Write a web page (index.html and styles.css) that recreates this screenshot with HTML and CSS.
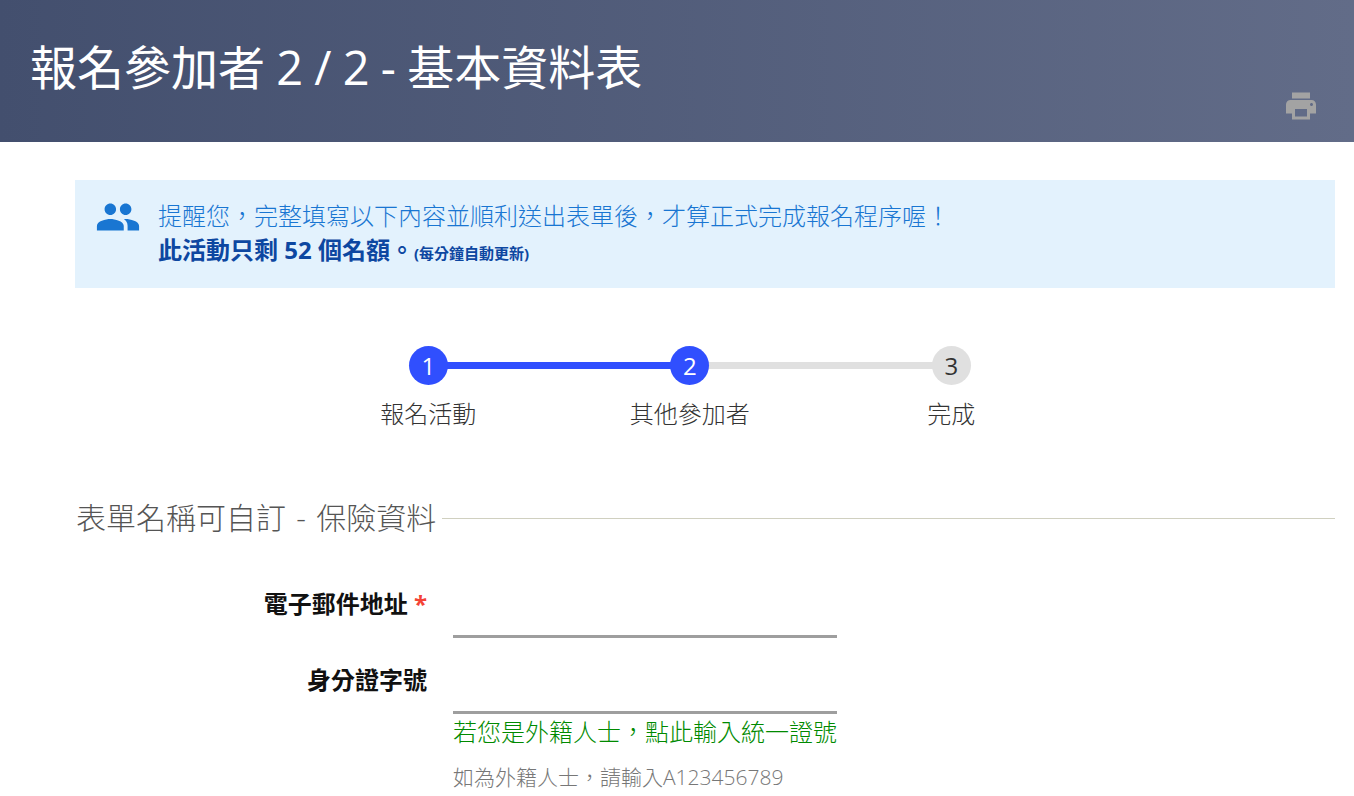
FILE: index.html
```html
<!DOCTYPE html>
<html lang="zh-TW">
<head>
<meta charset="utf-8">
<title>基本資料表</title>
<link rel="stylesheet" href="styles.css">
</head>
<body>
<header class="hero">
  <h1 class="hero-title">報名參加者 2 / 2 - 基本資料表</h1>
  <svg class="print-icon" viewBox="0 0 24 24" width="36" height="36" aria-hidden="true"><path d="M19 8H5c-1.66 0-3 1.34-3 3v6h4v4h12v-4h4v-6c0-1.66-1.34-3-3-3zm-3 11H8v-5h8v5zm3-7c-.55 0-1-.45-1-1s.45-1 1-1 1 .45 1 1-.45 1-1 1zm-1-9H6v4h12V3z"/></svg>
</header>
<main class="content">
  <section class="notice">
    <svg class="notice-icon" viewBox="0 0 24 24" width="48" height="48" aria-hidden="true"><path d="M16 11c1.66 0 2.99-1.34 2.99-3S17.66 5 16 5s-3 1.34-3 3 1.34 3 3 3zm-8 0c1.66 0 2.99-1.34 2.99-3S9.66 5 8 5 5 6.34 5 8s1.34 3 3 3zm0 2c-2.33 0-7 1.17-7 3.5V19h14v-2.5c0-2.33-4.67-3.5-7-3.5zm8 0c-.29 0-.62.02-.97.05 1.16.84 1.97 1.97 1.97 3.45V19h6v-2.5c0-2.33-4.67-3.5-7-3.5z"/></svg>
    <div class="notice-text">
      <p class="notice-line">提醒您，完整填寫以下內容並順利送出表單後，才算正式完成報名程序喔！</p>
      <p class="notice-quota">此活動只剩 52 個名額。<small class="notice-small">(每分鐘自動更新)</small></p>
    </div>
  </section>
  <ol class="steps">
    <li class="step done"><span class="step-dot">1</span><span class="step-label">報名活動</span></li>
    <li class="step done current"><span class="step-dot">2</span><span class="step-label">其他參加者</span></li>
    <li class="step"><span class="step-dot">3</span><span class="step-label">完成</span></li>
  </ol>
  <div class="section-head"><h2 class="section-title">表單名稱可自訂 - 保險資料</h2><span class="section-rule"></span></div>
  <div class="field field-email">
    <label class="field-label">電子郵件地址 <span class="req">*</span></label>
    <div class="field-body"><div class="field-input"></div></div>
  </div>
  <div class="field">
    <label class="field-label">身分證字號</label>
    <div class="field-body">
      <div class="field-input"></div>
      <a class="field-link">若您是外籍人士，點此輸入統一證號</a>
      <p class="field-help">如為外籍人士，請輸入A123456789</p>
    </div>
  </div>
</main>
</body>
</html>
```
FILE: styles.css
```css
* { box-sizing: border-box; }
html, body { margin: 0; height: 796px; overflow: hidden; }
body { background: #fff; font-family: "Open Sans", "Noto Sans CJK TC", sans-serif; font-weight: 300; color: #333; }
.hero { height: 142px; padding: 36px 35px 0 30px; display: flex; justify-content: space-between; background: linear-gradient(90deg, #434f6e, #626c88); }
.hero-title { margin: 0; font-size: 47px; line-height: 63px; font-weight: 400; word-spacing: -1px; color: #fff; }
.print-icon { fill: #a3a3a3; margin-top: 52px; }
.content { padding: 38px 19px 0 75px; }
.notice { height: 108px; background: #e3f2fd; display: flex; padding: 14px 0 0 20px; }
.notice-icon { fill: #1976d2; width: 46px; height: 46px; margin-right: 17px; flex: none; }
.notice-line { margin: 0; font-size: 24px; line-height: 44px; height: 38px; color: #1976d2; }
.notice-quota { margin: 0; font-size: 24px; line-height: 36px; font-weight: 700; color: #0d47a1; }
.notice-small { font-size: 15px; margin-left: 0; }
.steps { list-style: none; margin: 58px 0 0; padding: 0 0 0 222.5px; display: flex; }
.step { position: relative; width: 261.5px; display: flex; flex-direction: column; align-items: center; }
.step::before { content: ""; position: absolute; top: 16px; left: 50%; width: 100%; height: 7px; background: #e0e0e0; }
.step:last-child::before { display: none; }
.step.done:not(.current)::before { background: #304ffe; }
.step-dot { position: relative; width: 39px; height: 39px; border-radius: 50%; background: #e0e0e0; font-size: 24px; font-weight: 400; line-height: 39px; text-align: center; color: #333; }
.done .step-dot { background: #304ffe; color: #fff; }
.step-label { font-size: 24px; line-height: 30px; margin-top: 14px; white-space: nowrap; }
.section-head { display: flex; align-items: center; margin: 69px 0 0 1px; gap: 6px; }
.section-title { margin: 0; font-size: 30px; line-height: 40px; font-weight: 300; word-spacing: 2.5px; color: #555; white-space: nowrap; }
.section-rule { flex: 1; height: 1px; background: #d0d0c0; }
.field { display: flex; margin-top: 23px; }
.field-email { margin-top: 47px; }
.field-label { width: 352px; text-align: right; font-size: 24px; line-height: 38px; font-weight: 700; color: #111; white-space: nowrap; }
.req { color: #f44336; }
.field-body { margin-left: 26px; width: 384px; }
.field-input { height: 53px; border-bottom: 3px solid #9e9e9e; }
.field-link { display: block; font-size: 24px; line-height: 36px; color: #008a00; white-space: nowrap; }
.field-help { margin: 13px 0 0; font-size: 21px; line-height: 28px; color: #777; white-space: nowrap; }
```
